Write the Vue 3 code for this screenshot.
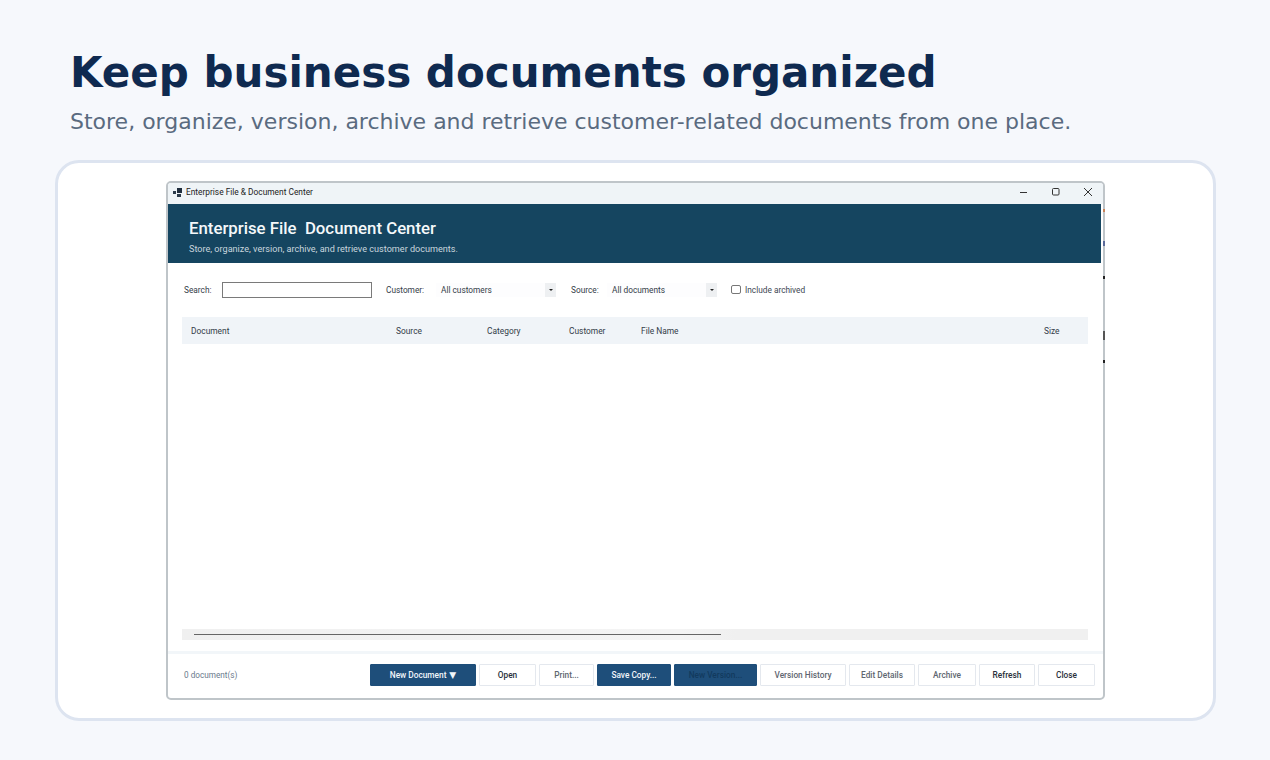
<template>
  <main class="page">
    <h1 class="page__title">Keep business documents organized</h1>
    <p class="page__subtitle">Store, organize, version, archive and retrieve customer-related documents from one place.</p>
    <section class="card">
      <div class="win">
        <div class="win__bar">
          <svg class="win__logo" width="10" height="9" viewBox="0 0 10 9">
            <rect x="0" y="3" width="3" height="3" fill="#2b3a4a" />
            <rect x="4" y="0" width="5" height="5" fill="#1f2d3d" />
            <rect x="4" y="6" width="4" height="3" fill="#2b3a4a" />
          </svg>
          <span class="win__name">Enterprise File &amp; Document Center</span>
          <div class="win__controls">
            <svg width="10" height="10" viewBox="0 0 10 10"><path d="M1 5.5h7" stroke="#333" fill="none" /></svg>
            <svg width="10" height="10" viewBox="0 0 10 10"><rect x="1.5" y="1.5" width="6.5" height="6.5" rx="1" stroke="#333" fill="none" /></svg>
            <svg width="10" height="10" viewBox="0 0 10 10"><path d="M1 1l8 8M9 1l-8 8" stroke="#333" fill="none" /></svg>
          </div>
        </div>
        <header class="banner">
          <h2 class="banner__title">Enterprise File&nbsp; Document Center</h2>
          <p class="banner__text">Store, organize, version, archive, and retrieve customer documents.</p>
        </header>
        <div class="filters">
          <label class="filters__label filters__label--search">Search:</label>
          <div class="filters__input"></div>
          <label class="filters__label filters__label--customer">Customer:</label>
          <div class="combo combo--customer">
            <span>All customers</span>
            <i class="combo__arrow"></i>
          </div>
          <label class="filters__label filters__label--source">Source:</label>
          <div class="combo combo--source">
            <span>All documents</span>
            <i class="combo__arrow"></i>
          </div>
          <span class="check"></span>
          <span class="check__label">Include archived</span>
        </div>
        <div class="table">
          <div class="table__head">
            <span v-for="col in columns" :key="col">{{ col }}</span>
          </div>
          <div class="table__body"></div>
          <div class="scroll">
            <div class="scroll__thumb"><div class="scroll__line"></div></div>
          </div>
        </div>
        <footer class="foot">
          <span class="foot__count">0 document(s)</span>
          <div class="foot__buttons">
            <button
              v-for="btn in buttons"
              :key="btn.label"
              class="btn"
              :class="btn.kind"
              :style="{ width: btn.width + 'px' }"
            >{{ btn.label }}<span v-if="btn.caret" class="btn__caret"> ▼</span></button>
          </div>
        </footer>
        <i
          v-for="mark in edgeMarks"
          :key="mark.top"
          class="win__mark"
          :style="{ top: mark.top + 'px', height: mark.height + 'px', background: mark.color }"
        ></i>
      </div>
    </section>
  </main>
</template>
<script setup>
const columns = ["Document", "Source", "Category", "Customer", "File Name", "Size"];

const buttons = [
  { label: "New Document", caret: true, width: 106, kind: "btn--primary" },
  { label: "Open", width: 57, kind: "btn--strong" },
  { label: "Print...", width: 55, kind: "btn--muted" },
  { label: "Save Copy...", width: 74, kind: "btn--primary" },
  { label: "New Version...", width: 83, kind: "btn--disabled" },
  { label: "Version History", width: 86, kind: "btn--muted" },
  { label: "Edit Details", width: 66, kind: "btn--muted" },
  { label: "Archive", width: 58, kind: "btn--muted" },
  { label: "Refresh", width: 56, kind: "btn--strong" },
  { label: "Close", width: 57, kind: "btn--strong" },
];

// stray pixels left along the right edge of the captured window
const edgeMarks = [
  { top: 26, height: 3, color: "#c9835a" },
  { top: 58, height: 5, color: "#5a6a9a" },
  { top: 93, height: 3, color: "#222" },
  { top: 148, height: 9, color: "#555" },
  { top: 177, height: 3, color: "#222" },
];
</script>
<style>
html,
body {
  margin: 0;
  background: #f6f8fc;
}
</style>
<style scoped>
.page {
  width: 1270px;
  height: 760px;
  box-sizing: border-box;
  padding: 47px 55px 0;
  overflow: hidden;
  background: #f6f8fc;
  font-family: "DejaVu Sans", sans-serif;
}

.page__title {
  margin: 0 0 0 15px;
  font-size: 42px;
  line-height: 52px;
  font-weight: 700;
  color: #0f2a50;
}

.page__subtitle {
  margin: 7px 0 0 15px;
  font-size: 22px;
  line-height: 32px;
  color: #5a6b80;
}

.card {
  margin-top: 22px;
  width: 1161px;
  height: 561px;
  box-sizing: border-box;
  border: 3px solid #dde4f0;
  border-radius: 24px;
  background: #fff;
  padding: 18px 0 0 108px;
}

.win {
  position: relative;
  width: 939px;
  height: 519px;
  box-sizing: border-box;
  border: 2px solid #bfc5c9;
  border-radius: 5px;
  background: #fff;
  display: flex;
  flex-direction: column;
  font-family: Roboto, "Open Sans", sans-serif;
  color: #2b3440;
}

.win__mark {
  position: absolute;
  right: -2px;
  width: 2px;
}

.win__bar {
  height: 21px;
  flex: none;
  box-sizing: border-box;
  padding: 0 0 3px 5px;
  display: flex;
  align-items: center;
  background: #eff4f7;
  border-radius: 3px 3px 0 0;
}

.win__logo {
  margin-right: 3px;
}

.win__name {
  font-size: 8.35px;
  color: #222;
}

.win__controls {
  margin-left: auto;
  display: flex;
  gap: 22px;
  padding-right: 10px;
}

.banner {
  height: 59px;
  flex: none;
  box-sizing: border-box;
  margin-right: 2px;
  padding: 14px 0 0 21px;
  background: #154560;
  color: #fff;
}

.banner__title {
  margin: 0;
  font-size: 16.8px;
  line-height: 20px;
  font-weight: 500;
  color: #f4f8fa;
}

.banner__text {
  margin: 5px 0 0;
  font-size: 9.1px;
  line-height: 12px;
  color: #c9d6de;
}

.filters {
  height: 54px;
  flex: none;
  display: flex;
  align-items: center;
  padding: 0 0 0 16px;
  font-size: 8.3px;
}

.filters__label {
  color: #333c48;
}

.filters__label--search {
  width: 38px;
}

.filters__input {
  width: 150px;
  height: 16px;
  box-sizing: border-box;
  border: 1px solid #7a7a7a;
  background: #fff;
}

.filters__label--customer {
  margin-left: 14px;
  width: 50px;
}

.combo {
  display: flex;
  align-items: center;
  justify-content: space-between;
  height: 14px;
  padding-left: 5px;
  color: #333c48;
  background: #fdfdfe;
}

.combo--customer {
  width: 115px;
}

.filters__label--source {
  margin-left: 15px;
  width: 36px;
}

.combo--source {
  width: 105px;
}

.combo__arrow {
  position: relative;
  width: 11px;
  height: 14px;
  background: #eef0f2;
}

.combo__arrow::after {
  content: "";
  position: absolute;
  left: 4px;
  top: 6px;
  border: 2px solid transparent;
  border-top: 2.5px solid #222;
  border-bottom: 0;
}

.check {
  margin-left: 14px;
  margin-bottom: 1px;
  width: 10px;
  height: 9px;
  box-sizing: border-box;
  border: 1px solid #777;
  border-radius: 2px;
}

.check__label {
  margin-left: 4px;
  margin-bottom: 1px;
  color: #3d4652;
}

.table {
  flex: 1;
  margin: 0 15px 0 14px;
  display: flex;
  flex-direction: column;
}

.table__head {
  height: 27px;
  flex: none;
  display: grid;
  grid-template-columns: 205px 91px 82px 72px 403px 1fr;
  align-items: center;
  padding: 0 0 0 9px;
  box-sizing: border-box;
  background: #f0f4f8;
  font-size: 8.4px;
  color: #333c48;
}

.table__body {
  flex: 1;
}

.scroll {
  height: 11px;
  flex: none;
  background: #f0f0f0;
}

.scroll__thumb {
  width: 554px;
  height: 11px;
  box-sizing: border-box;
  padding: 5px 15px 0 12px;
  background: linear-gradient(90deg, #f0f0f0, #f4f4f4 90%, #f0f0f0);
}

.scroll__line {
  height: 1px;
  background: #666;
}

.foot {
  margin-top: 11px;
  height: 47px;
  flex: none;
  box-sizing: border-box;
  border-top: 3px solid #f2f6f9;
  display: flex;
  align-items: flex-start;
  padding: 10px 8px 0 16px;
}

.foot__count {
  margin-top: 6px;
  font-size: 8.2px;
  color: #6a7a8c;
}

.foot__buttons {
  margin-left: auto;
  display: flex;
  gap: 3px;
}

.btn {
  height: 22px;
  padding: 0;
  box-sizing: border-box;
  border: 1px solid #e4e8ee;
  border-radius: 1px;
  background: #fff;
  font-family: inherit;
  font-size: 8.3px;
  font-weight: 500;
}

.btn__caret {
  font-family: "DejaVu Sans", sans-serif;
  font-size: 9px;
}

.btn--primary {
  background: #1e4e7a;
  border-color: #1e4e7a;
  color: #f2f6fa;
}

.btn--disabled {
  background: #1e4e7a;
  border-color: #1e4e7a;
  color: #123a5e;
}

.btn--strong {
  color: #28303a;
}

.btn--muted {
  color: #5e6670;
}
</style>
